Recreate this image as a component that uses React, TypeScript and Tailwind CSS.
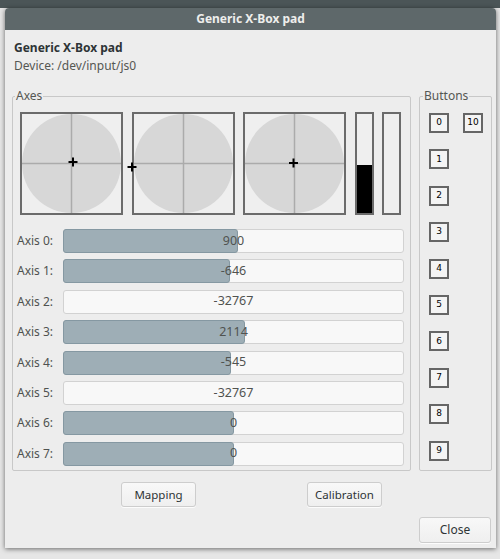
import React from "react";

const axes = [900, -646, -32767, 2114, -545, -32767, 0, 0];

const sticks = [
  { x: 53, y: 50 },
  { x: 0, y: 55 },
  { x: 50.5, y: 51 },
];

function Stick({ x, y }: { x: number; y: number }) {
  return (
    <svg width="103" height="103" viewBox="0 0 103 103" className="overflow-visible shrink-0">
      <rect x="1" y="1" width="101" height="101" fill="#efefef" stroke="#6b6b6b" strokeWidth="2" />
      <circle cx="51.5" cy="51.5" r="49.5" fill="#d7d7d7" />
      <line x1="51.5" y1="2" x2="51.5" y2="101" stroke="#ababab" strokeWidth="1.5" />
      <line x1="2" y1="51.5" x2="101" y2="51.5" stroke="#ababab" strokeWidth="1.5" />
      <line x1={x - 4.5} y1={y} x2={x + 4.5} y2={y} stroke="#000" strokeWidth="2" />
      <line x1={x} y1={y - 4.5} x2={x} y2={y + 4.5} stroke="#000" strokeWidth="2" />
    </svg>
  );
}

function Throttle({ fill }: { fill: boolean }) {
  return (
    <div className="w-[19px] h-[103px] shrink-0 border-2 border-[#6b6b6b] bg-[#efefef] flex flex-col justify-end">
      {fill && <div className="h-[48px] bg-black" />}
    </div>
  );
}

function AxisRow({ i, value }: { i: number; value: number }) {
  const pct = ((value + 32767) / 65534) * 100;
  return (
    <div className="flex items-center h-[24px]">
      <span className="w-[46px] text-[12px] text-[#4f5250]">Axis {i}:</span>
      <div className="relative w-[341px] h-[24px]">
        <div className="absolute inset-0 rounded-[3px] border border-[#d2d2d2] bg-[#f8f8f8]" />
        {pct > 0.5 && (
          <div
            className="absolute left-0 top-0 h-full rounded-[3px] border border-[#8598a2] bg-[#9eaeb6]"
            style={{ width: `${pct}%` }}
          />
        )}
        <div className="absolute inset-0 flex items-center justify-center text-[12.5px] text-[#505350]">
          {value}
        </div>
      </div>
    </div>
  );
}

function PadButton({ n }: { n: number }) {
  return (
    <div className="w-[20px] h-[20px] border-2 border-[#666666] bg-[#f4f4f4] flex items-center justify-center text-[9px] text-black font-['DejaVu_Sans',sans-serif]">
      {n}
    </div>
  );
}

function Button({ label, className }: { label: string; className: string }) {
  return (
    <button
      className={
        "h-[25px] rounded-[3px] border border-[#cdcdcd] bg-gradient-to-b from-[#f8f8f8] to-[#efefef] text-[11.5px] text-[#2e3436] shadow-[0_1px_0_rgba(255,255,255,0.8)] " +
        className
      }
    >
      {label}
    </button>
  );
}

export default function App() {
  return (
    <div className="w-[500px] h-[559px] overflow-hidden bg-[#e6e6e6] font-['Noto_Sans',sans-serif]">
      <div className="h-[8px] bg-[#4b5557]" />
      <div className="ml-[5px] w-[491px] h-[540px] flex flex-col bg-[#ededed] rounded-t-[4px] shadow-[0_1px_5px_rgba(0,0,0,0.55)]">
        <div className="h-[22px] shrink-0 rounded-t-[4px] bg-[#5e686a] flex items-center justify-center text-[12px] font-bold text-[#eeeeec]">
          Generic X-Box pad
        </div>

        <div className="pl-[9px] pt-[8.6px] leading-[18px] text-[12px]">
          <div className="font-bold text-[#2e3436]">Generic X-Box pad</div>
          <div className="text-[#555753]">Device: /dev/input/js0</div>
        </div>

        <div className="flex mt-[21.4px] ml-[7px]">
          <div className="relative w-[399px] h-[375px] rounded-[2px] border border-[#c8c8c8] pt-[15px] px-[4px]">
            <span className="absolute left-[2px] -top-[10px] px-[1px] bg-[#ededed] text-[12px] leading-[18px] text-[#555753]">
              Axes
            </span>
            <div className="flex gap-[8.5px] pl-[3px]">
              {sticks.map((s, k) => (
                <Stick key={k} x={s.x} y={s.y} />
              ))}
              <Throttle fill />
              <Throttle fill={false} />
            </div>
            <div className="flex flex-col gap-[6.4px] mt-[14px]">
              {axes.map((v, i) => (
                <AxisRow key={i} i={i} value={v} />
              ))}
            </div>
          </div>

          <div className="relative ml-[8px] w-[73px] h-[375px] rounded-[2px] border border-[#c8c8c8] pt-[16px] pl-[9px] flex gap-[14px]">
            <span className="absolute left-[3px] -top-[10px] px-[1px] bg-[#ededed] text-[12px] leading-[18px] text-[#555753]">
              Buttons
            </span>
            <div className="flex flex-col gap-[16.4px]">
              {[0, 1, 2, 3, 4, 5, 6, 7, 8, 9].map((n) => (
                <PadButton key={n} n={n} />
              ))}
            </div>
            <div>
              <PadButton n={10} />
            </div>
          </div>
        </div>

        <div className="flex mt-[11px] pl-[116px] gap-[111px]">
          <Button label="Mapping" className="w-[75px]" />
          <Button label="Calibration" className="w-[75px]" />
        </div>

        <div className="flex justify-end mt-[10px] pr-[5px]">
          <Button label="Close" className="w-[72px] !h-[26px] text-[12px]" />
        </div>
      </div>
    </div>
  );
}
